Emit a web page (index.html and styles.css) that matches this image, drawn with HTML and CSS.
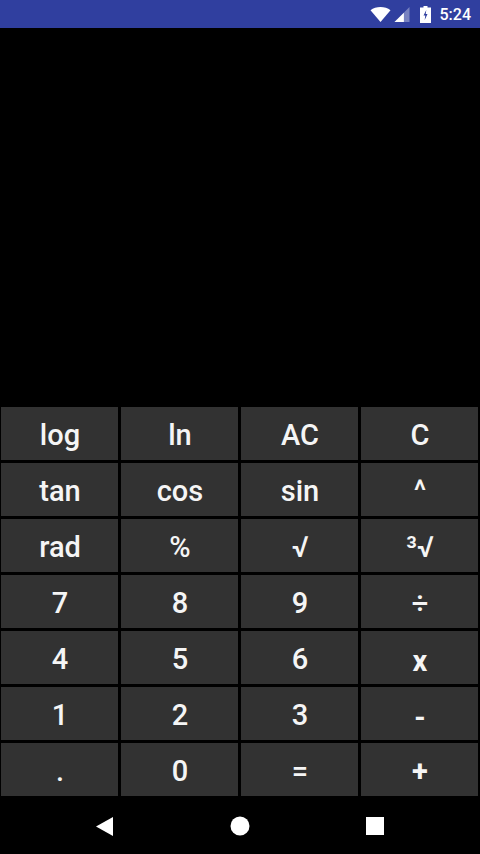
FILE: index.html
```html
<!DOCTYPE html>
<html lang="en">
<head>
    <meta charset="UTF-8">
    <meta name="viewport" content="width=device-width, initial-scale=1.0">
    <title>Calculator</title>
    <link rel="stylesheet" href="styles.css">
</head>
<body>
    <div class="status-bar">
        <svg class="icon-wifi" viewBox="0 0 20 15" width="21" height="15"><path d="M0 3.200C2.800 1 6.200 0 10 0s7.200 1 10 3.200L10 15z"/></svg>
        <svg class="icon-signal" viewBox="0 0 16 16" width="16" height="15"><path d="M16 0v16H0z" opacity="0.35"/><path d="M10 6v10H0z"/></svg>
        <svg class="icon-battery" viewBox="0 0 11 17" width="11" height="17"><path fill-rule="evenodd" d="M3.500 0h4v1.500H11V17H0V1.500h3.500zM6.300 4L3.500 9.500h1.800l-.6 4.500 2.800-6H5.700z"/></svg>
        <span class="clock">5:24</span>
    </div>

    <div class="display"></div>

    <div class="keypad">
        <button class="key">log</button>
        <button class="key">ln</button>
        <button class="key">AC</button>
        <button class="key">C</button>
        <button class="key">tan</button>
        <button class="key">cos</button>
        <button class="key">sin</button>
        <button class="key">^</button>
        <button class="key">rad</button>
        <button class="key">%</button>
        <button class="key">√</button>
        <button class="key">³√</button>
        <button class="key">7</button>
        <button class="key">8</button>
        <button class="key">9</button>
        <button class="key">÷</button>
        <button class="key">4</button>
        <button class="key">5</button>
        <button class="key">6</button>
        <button class="key key-bold key-low">x</button>
        <button class="key">1</button>
        <button class="key">2</button>
        <button class="key">3</button>
        <button class="key key-bold key-low">-</button>
        <button class="key">.</button>
        <button class="key">0</button>
        <button class="key">=</button>
        <button class="key key-bold">+</button>
    </div>

    <div class="nav-bar">
        <svg class="icon-back" viewBox="0 0 18 20" width="17" height="19"><path d="M18 0v20L0 10z"/></svg>
        <svg viewBox="0 0 20 20" width="20" height="20"><circle cx="10" cy="10" r="9.500"/></svg>
        <svg viewBox="0 0 18 18" width="18" height="18"><rect width="18" height="18"/></svg>
    </div>
</body>
</html>
```

FILE: styles.css
```css
* {
    box-sizing: border-box;
    margin: 0;
    padding: 0;
}

body {
    width: 480px;
    height: 854px;
    display: flex;
    flex-direction: column;
    overflow: hidden;
    background-color: #000;
    font-family: Roboto, "Liberation Sans", sans-serif;
}

.status-bar {
    height: 28px;
    display: flex;
    align-items: center;
    justify-content: flex-end;
    padding-right: 9px;
    background-color: #303f9f;
    color: #fff;
}

.status-bar svg {
    fill: #fff;
}

.icon-wifi {
    margin-right: 3px;
}

.icon-signal {
    margin-right: 10px;
}

.icon-battery {
    margin-right: 9px;
}

.clock {
    font-size: 16px;
    font-weight: 500;
}

.display {
    flex: 1;
}

.keypad {
    display: grid;
    grid-template-columns: repeat(4, 117px);
    grid-auto-rows: 53px;
    gap: 3px;
    padding: 1px 1px 2px;
}

.key {
    border: none;
    padding: 2px 0 0 1px;
    background-color: #323232;
    color: #f5f5f5;
    font-family: inherit;
    font-size: 29px;
    font-weight: 500;
}

.key-bold {
    font-weight: 700;
}

.key-low {
    padding-top: 6px;
}

.nav-bar {
    height: 56px;
    display: grid;
    grid-template-columns: repeat(3, 135px);
    justify-content: center;
    justify-items: center;
    align-items: center;
}

.nav-bar svg {
    fill: #fff;
}

.icon-back {
    margin-right: 2px;
}
```
